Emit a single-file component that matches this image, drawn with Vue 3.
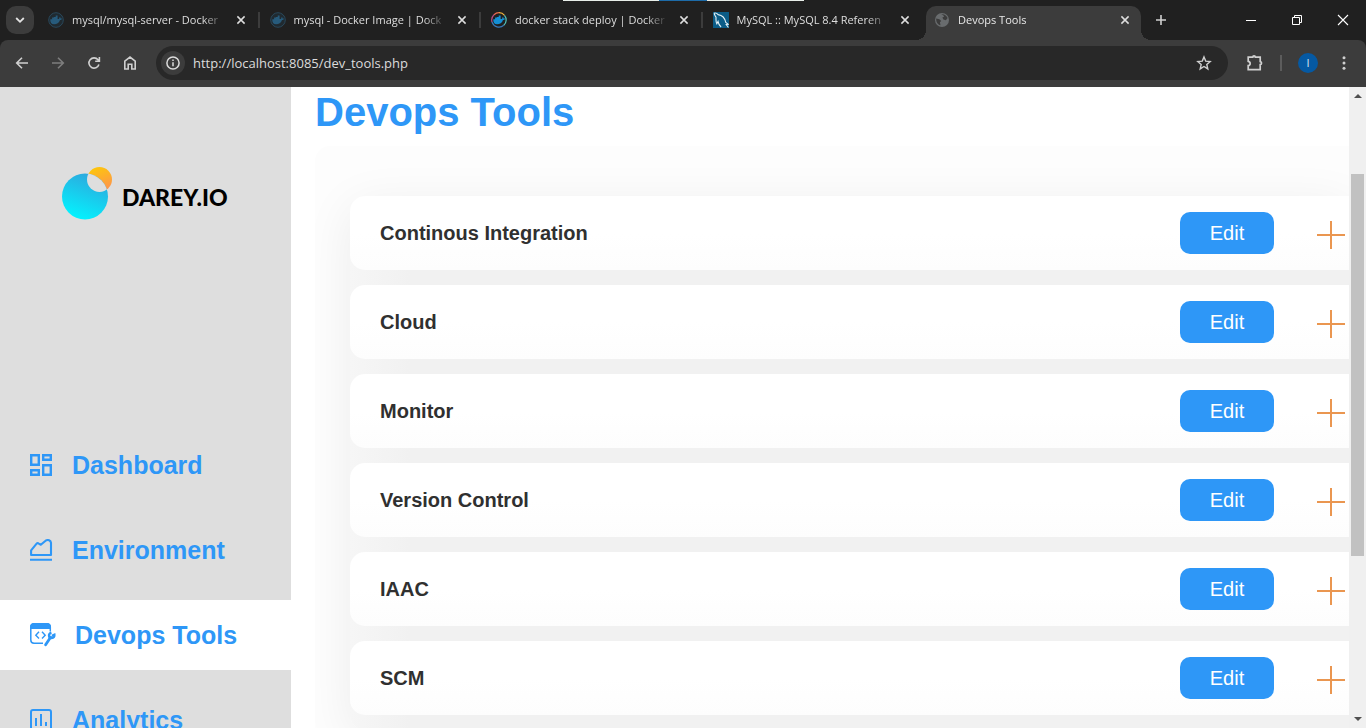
<script setup>
import { ref } from 'vue'

const url = ref('http://localhost:8085/dev_tools.php')

const tabs = [
  { icon: 'docker-dim', title: 'mysql/mysql-server - Docker' },
  { icon: 'docker-dim', title: 'mysql - Docker Image | Dock' },
  { icon: 'docker', title: 'docker stack deploy | Docker' },
  { icon: 'mysql', title: 'MySQL :: MySQL 8.4 Referen' },
  { icon: 'globe', title: 'Devops Tools', active: true },
]

const nav = [
  { icon: 'dashboard', label: 'Dashboard' },
  { icon: 'environment', label: 'Environment' },
  { icon: 'tools', label: 'Devops Tools', active: true },
  { icon: 'analytics', label: 'Analytics' },
]

const tools = ['Continous Integration', 'Cloud', 'Monitor', 'Version Control', 'IAAC', 'SCM']
</script>

<template>
  <div class="window">
    <header class="chrome">
      <div class="top-strip"></div>
      <div class="tab-strip">
        <button class="tab-search" aria-label="Search tabs">
          <svg width="10" height="10" viewBox="0 0 10 10" fill="none" stroke="#e3e3e3" stroke-width="1.8"><path d="M1.2 3l3.8 3.8L8.8 3" /></svg>
        </button>
        <div class="tabs">
          <div v-for="(tab, i) in tabs" :key="i" class="tab" :class="{ active: tab.active, divided: i < 3 }">
            <svg v-if="tab.icon.startsWith('docker')" class="favicon" viewBox="0 0 16 16">
              <template v-if="tab.icon === 'docker'">
                <g fill="none" stroke-width="1.2">
                  <path d="M1 10A7.3 7.3 0 0 1 3 2.7" stroke="#b64d85" />
                  <path d="M3 2.7A7.3 7.3 0 0 1 8 .7" stroke="#ee6a4f" />
                  <path d="M8 .7a7.3 7.3 0 0 1 5.5 2.6" stroke="#f3b43c" />
                  <path d="M13.5 3.3a7.3 7.3 0 0 1-.7 10" stroke="#54c6c0" />
                  <path d="M12.8 13.3A7.3 7.3 0 0 1 1 10" stroke="#3978b9" />
                </g>
              </template>
              <circle v-else cx="8" cy="8" r="7.3" fill="#202a30" stroke="#29485b" />
              <path :fill="tab.icon === 'docker' ? '#138fd5' : '#275b7c'" d="M2.3 7.2h1.8V5.6h1.8V5h1.8V3.6h1.9v3.3h1.2c.7-.3.4-1.1 1-1.8.7.4.8 1 .8 1.4.5-.1 1-.1 1.5.2-.4 1-1.3 1.2-2.1 1.2-1 2.9-3.2 4.4-5.9 4.4-2.7 0-4.1-2.1-3.8-5.1z" />
            </svg>
            <svg v-else-if="tab.icon === 'mysql'" class="favicon" viewBox="0 0 16 16">
              <path fill="#0b5c87" d="M0 0h16v16H0z" />
              <path fill="none" stroke="#e6f2f7" stroke-width="1.1" d="M1 1.2c2-.5 3.2.3 4.1 1.4C9 3.2 12 6.5 12.8 10.5l2.5 1.8-2.1.2 2.2 3M1 1.2c.7 1.4.8 2.5 2 3.9.1 2.3-.4 4.6.8 6.7L5 9.4c.4 2.2 1.1 4 3.1 5.6" />
            </svg>
            <svg v-else class="favicon" viewBox="0 0 16 16">
              <circle cx="8" cy="8" r="7" fill="#696c6e" />
              <path fill="#3c3c3c" d="M2.2 6.4l3.2.8 1.8 1.7-1.3 1.4.6 2.9C3.8 12.6 1.9 10 2.2 6.4zM7.2 2.3c3-.6 5.7 1.3 6.4 3.8l-1.7 2.1-2.5-.8-1-1.8 1.8-1-1-1.4z" />
            </svg>
            <span class="tab-title">{{ tab.title }}</span>
            <button class="tab-close" aria-label="Close tab">
              <svg width="10" height="10" viewBox="0 0 10 10" stroke="#dedede" stroke-width="1.5"><path d="M1.4 1.4l7.2 7.2M8.6 1.4L1.4 8.6" /></svg>
            </button>
          </div>
        </div>
        <button class="new-tab" aria-label="New tab">
          <svg width="12" height="12" viewBox="0 0 12 12" stroke="#d0d0d0" stroke-width="1.6"><path d="M6 1v10M1 6h10" /></svg>
        </button>
        <div class="window-controls">
          <button aria-label="Minimize"><svg width="12" height="12" viewBox="0 0 12 12" stroke="#fff"><path d="M1 6.5h10" /></svg></button>
          <button aria-label="Restore"><svg width="12" height="12" viewBox="0 0 12 12" stroke="#fff" fill="none"><path d="M1.5 3.5h7v7h-7zM3.5 3.5v-2h7v7h-2" /></svg></button>
          <button aria-label="Close"><svg width="12" height="12" viewBox="0 0 12 12" stroke="#fff" stroke-width="1.1"><path d="M1 1l10 10M11 1L1 11" /></svg></button>
        </div>
      </div>

      <div class="toolbar">
        <div class="history">
          <button aria-label="Back"><svg width="16" height="16" viewBox="0 0 16 16"><path d="M14 8H3M8 2.7L2.7 8 8 13.3" /></svg></button>
          <button class="disabled" aria-label="Forward"><svg width="16" height="16" viewBox="0 0 16 16"><path d="M2 8h11M8 2.7L13.3 8 8 13.3" /></svg></button>
          <button aria-label="Reload"><svg width="16" height="16" viewBox="0 0 16 16"><path d="M12.9 9.5A5.1 5.1 0 1 1 12 4.8L13.4 6M13.4 2v4.3H9.2" /></svg></button>
          <button aria-label="Home"><svg width="16" height="16" viewBox="0 0 16 16"><path d="M2.8 14V6.2L8 2.1l5.2 4.1V14H9.8V9.2H6.2V14z" /></svg></button>
        </div>
        <div class="omnibox">
          <button class="site-info" aria-label="View site information">
            <svg width="16" height="16" viewBox="0 0 16 16" fill="none" stroke="#dcdcdc" stroke-width="1.5"><circle cx="8" cy="8" r="6.1" /><path d="M8 7.2v4M8 4.5v1.6" /></svg>
          </button>
          <input v-model="url" class="url" aria-label="Address" spellcheck="false" />
          <button class="bookmark" aria-label="Bookmark this tab">
            <svg width="16" height="16" viewBox="0 0 16 16" fill="none" stroke="#d0d0d0" stroke-width="1.4"><path d="M8 1.9l1.7 4.2 4.5.4-3.4 3 1 4.4L8 11.5l-3.8 2.4 1-4.4-3.4-3 4.5-.4z" /></svg>
          </button>
        </div>
        <button class="extensions" aria-label="Extensions">
          <svg width="18" height="18" viewBox="0 0 18 18" fill="none" stroke="#d0d0d0" stroke-width="1.7"><path d="M2.2 3.2h4.6c0-1.7 2.5-1.7 2.5 0h4.9v4.4c1.8.2 1.8 2.8 0 3v5h-12v-4c2.6-.3 2.6-4 0-4.3z" /></svg>
        </button>
        <span class="rule"></span>
        <button class="profile" aria-label="Profile">I</button>
        <button class="menu" aria-label="Menu">
          <svg width="16" height="16" viewBox="0 0 16 16" fill="#d0d0d0"><circle cx="8" cy="2.7" r="1.5" /><circle cx="8" cy="8" r="1.5" /><circle cx="8" cy="13.3" r="1.5" /></svg>
        </button>
      </div>
    </header>

    <div class="page">
      <aside class="sidebar">
        <a class="brand" href="#">
          <svg width="52" height="54" viewBox="0 0 52 54">
            <defs>
              <linearGradient id="sea" x1=".7" y1="0" x2=".3" y2="1">
                <stop offset="0" stop-color="#2fa5dc" /><stop offset="1" stop-color="#02f5ff" />
              </linearGradient>
              <linearGradient id="sun" x1=".3" y1="0" x2=".7" y2="1">
                <stop offset="0" stop-color="#fdc70a" /><stop offset="1" stop-color="#fd9251" />
              </linearGradient>
              <clipPath id="disc"><circle cx="37.5" cy="13.5" r="12.5" /></clipPath>
            </defs>
            <circle cx="37.5" cy="13.5" r="12.5" fill="url(#sun)" />
            <circle cx="23" cy="30.5" r="23" fill="url(#sea)" />
            <circle cx="23" cy="30.5" r="23" fill="#dedede" clip-path="url(#disc)" />
          </svg>
          <span>DAREY.IO</span>
        </a>
        <nav class="nav">
          <a v-for="item in nav" :key="item.label" href="#" class="nav-item" :class="{ active: item.active }">
            <svg v-if="item.icon === 'dashboard'" width="23" height="23" viewBox="0 0 23 23" class="line"><path d="M1.2 1.2h7.6v9.6H1.2zM13.2 1.2h7.6v4.6h-7.6zM1.2 16.2h7.6v4.6H1.2zM13.2 11.2h7.6v9.6h-7.6z" /></svg>
            <svg v-else-if="item.icon === 'environment'" width="23" height="23" viewBox="0 0 23 23" class="line"><path stroke-width="2.1" stroke-linejoin="round" d="M1.1 16v-4.6l5.3-6.5c.7-.8 1.6-.9 2.4-.3l2 1.2 4.8-4.1c2.3-1.4 5.2-.4 5.4 2.2V16zM0 20.8h22" /></svg>
            <svg v-else-if="item.icon === 'tools'" width="26" height="24" viewBox="0 0 26 24" class="line">
              <path fill="#2e97f7" stroke="none" d="M4 0h13a4 4 0 0 1 4 4v2H0V4a4 4 0 0 1 4-4z" />
              <path stroke-width="1.5" d="M20.3 8.5V4A3.2 3.2 0 0 0 17 .8H4A3.2 3.2 0 0 0 .8 4v13A3.2 3.2 0 0 0 4 20.2h9" />
              <path stroke-width="1.4" d="M9 8.8l-3.2 3.4L9 15.6M12 8.8l3.2 3.4-3.2 3.4" />
              <path stroke-width="2.8" stroke-linecap="round" d="M15.6 21.8l5-7.6" />
              <path stroke-width="2.3" d="M21.4 9.7c-3.6 1.3-2.9 5.4.3 5.3 2 0 3-1.5 2.7-3.4l-2.5 1.1" />
            </svg>
            <svg v-else width="23" height="23" viewBox="0 0 23 23" class="line"><rect x="1" y="1" width="20" height="20" rx="2" stroke-width="2" /><path stroke-width="2" d="M6 9v8M11 5v12M16 13v4" /></svg>
            <span>{{ item.label }}</span>
          </a>
        </nav>
      </aside>

      <main class="content">
        <h1>Devops Tools</h1>
        <section class="panel">
          <ul class="list">
            <li v-for="tool in tools" :key="tool" class="card">
              <h2>{{ tool }}</h2>
              <button class="edit">Edit</button>
              <button class="expand" :aria-label="'Expand ' + tool">
                <svg width="28" height="32" viewBox="0 0 28 32" stroke="#ea9650" stroke-width="2"><path d="M14 4v28M0 18h28" /></svg>
              </button>
            </li>
          </ul>
        </section>
      </main>

      <div class="scrollbar">
        <svg width="17" height="17" viewBox="0 0 17 17"><path fill="#505050" d="M5 11l4-4 4 4z" /></svg>
        <div class="track"><div class="thumb"></div></div>
        <svg width="17" height="17" viewBox="0 0 17 17"><path fill="#505050" d="M5 6l4 4 4-4z" /></svg>
      </div>
    </div>
  </div>
</template>

<style>
body {
  background: #fff;
  overflow: hidden;
}
</style>

<style scoped>
* {
  box-sizing: border-box;
}
button {
  padding: 0;
  border: 0;
  background: none;
  font: inherit;
  display: flex;
  align-items: center;
  justify-content: center;
  flex: none;
}
svg {
  display: block;
  flex: none;
}
.window {
  height: 100vh;
  display: flex;
  flex-direction: column;
  overflow: hidden;
  font-family: "Liberation Sans", Arial, sans-serif;
}

/* Browser frame */
.chrome {
  position: relative;
  flex: none;
  background: #202020;
  font-family: "Open Sans", "Noto Sans", sans-serif;
  color: #dedede;
}
.top-strip {
  position: absolute;
  top: 0;
  left: 563px;
  width: 241px;
  height: 1px;
  background: linear-gradient(to right, #e8eee9 96px, #1d6ba8 96px 144px, #e8eee9 144px);
}
.tab-strip {
  height: 40px;
  display: flex;
  align-items: center;
  padding-left: 6px;
}
.tab-search {
  width: 28px;
  height: 28px;
  border-radius: 10px;
  background: #3c3c3c;
}
.tabs {
  flex: 0 1 1101px;
  min-width: 0;
  margin-left: 6px;
  display: flex;
  align-self: flex-end;
}
.tab {
  position: relative;
  flex: 1 1 0;
  min-width: 0;
  height: 34px;
  padding: 0 13px 6px 8px;
  display: flex;
  align-items: center;
}
.tab.divided::after {
  content: "";
  position: absolute;
  right: 2px;
  top: 6px;
  width: 2px;
  height: 16px;
  background: #3c3c3c;
}
.tab.active {
  flex: 0 1 215px;
  padding-right: 8px;
  background: #3c3c3c;
  border-radius: 10px 10px 0 0;
  color: #e8e8e8;
}
.tab.active::before,
.tab.active::after {
  content: "";
  position: absolute;
  bottom: 0;
  width: 10px;
  height: 10px;
}
.tab.active::before {
  left: -10px;
  background: radial-gradient(circle at 0 0, transparent 10px, #3c3c3c 10px);
}
.tab.active::after {
  right: -10px;
  background: radial-gradient(circle at 100% 0, transparent 10px, #3c3c3c 10px);
}
.favicon {
  width: 16px;
  height: 16px;
}
.tab-title {
  flex: 1;
  min-width: 0;
  margin: 0 6px 0 8px;
  overflow: hidden;
  white-space: nowrap;
  font-size: 11px;
  line-height: 16px;
  mask-image: linear-gradient(to right, #000 calc(100% - 24px), transparent calc(100% - 2px));
}
.tab-close {
  width: 16px;
  height: 16px;
}
.new-tab {
  width: 28px;
  height: 28px;
  margin-left: 6px;
}
.window-controls {
  display: flex;
  margin-left: auto;
}
.window-controls button {
  width: 46px;
  height: 40px;
}
.toolbar {
  height: 47px;
  padding: 0 14px 1px;
  display: flex;
  align-items: center;
  background: #3c3c3c;
  border-radius: 8px 8px 0 0;
}
.history {
  display: flex;
  gap: 20px;
  margin-right: 18px;
}
.history svg {
  fill: none;
  stroke: #d0d0d0;
  stroke-width: 1.6;
}
.history .disabled svg {
  stroke: #7e7e7e;
}
.omnibox {
  flex: 1;
  min-width: 0;
  height: 34px;
  padding: 0 16px 0 5px;
  display: flex;
  align-items: center;
  background: #282828;
  border-radius: 17px;
}
.site-info {
  width: 24px;
  height: 24px;
  border-radius: 12px;
  background: #3c3c3c;
}
.url {
  flex: 1;
  min-width: 0;
  margin-left: 8px;
  padding: 0;
  border: 0;
  outline: 0;
  background: none;
  color: #dcdcdc;
  font: 13px/20px "Open Sans", "Noto Sans", sans-serif;
}
.extensions {
  margin-left: 18px;
}
.rule {
  width: 2px;
  height: 16px;
  margin: 0 16px;
  background: #5c5c5c;
}
.profile {
  width: 20px;
  height: 20px;
  border-radius: 10px;
  background: #0559a3;
  color: #d6e6f5;
  font-size: 11px;
  line-height: 20px;
}
.menu {
  margin-left: 18px;
}

/* Web page */
.page {
  flex: 1;
  min-height: 0;
  display: flex;
  overflow: hidden;
}
.sidebar {
  flex: 0 0 291px;
  background: #dedede;
}
.brand {
  margin: 79px 0 0 62px;
  display: flex;
  align-items: center;
  gap: 8px;
  color: #000;
  text-decoration: none;
  font: 900 23px/28px Lato, sans-serif;
}
.brand span {
  padding-top: 8px;
}
.nav {
  margin-top: 210px;
  display: flex;
  flex-direction: column;
  gap: 15px;
}
.nav-item {
  height: 70px;
  padding-left: 30px;
  display: flex;
  align-items: center;
  gap: 19px;
  color: #2e97f7;
  text-decoration: none;
  font-size: 25px;
  line-height: 30px;
  font-weight: 700;
}
.nav-item.active {
  background: #fff;
}
.line {
  fill: none;
  stroke: #2e97f7;
  stroke-width: 2.4;
}
.content {
  flex: 1;
  min-width: 0;
  padding-left: 24px;
}
h1 {
  margin: 2px 0 11px;
  color: #2e97f7;
  font-size: 40px;
  line-height: 46px;
  font-weight: 700;
}
.panel {
  padding: 50px 0 50px 35px;
  overflow: hidden;
  background: #fdfdfd;
  border-radius: 15px 0 0 0;
}
.list {
  margin: 0;
  padding: 0 0 15px;
  list-style: none;
  display: flex;
  flex-direction: column;
  gap: 15px;
  border-radius: 15px 0 0 15px;
  background: linear-gradient(to right, #f6f6f6, #f1f1f1 60px);
  box-shadow: 0 10px 50px rgba(0, 0, 0, 0.07);
}
.card {
  padding: 16px 4px 16px 30px;
  display: flex;
  align-items: center;
  background: linear-gradient(#fff 50%, #fdfdfd);
  border-radius: 15px 0 0 15px;
}
h2 {
  flex: 1;
  margin: 0;
  color: #303030;
  font-size: 20px;
  line-height: 24px;
  font-weight: 700;
}
.edit {
  width: 94px;
  height: 42px;
  border-radius: 10px;
  background: #2e97f7;
  color: #fff;
  font-size: 20px;
  line-height: 24px;
}
.expand {
  margin-left: 43px;
}
.scrollbar {
  flex: 0 0 17px;
  display: flex;
  flex-direction: column;
  background: #f0f0f0;
}
.track {
  flex: 1;
  padding: 0 2px;
}
.thumb {
  height: 63%;
  margin-top: 70px;
  background: #c1c1c1;
}
</style>
